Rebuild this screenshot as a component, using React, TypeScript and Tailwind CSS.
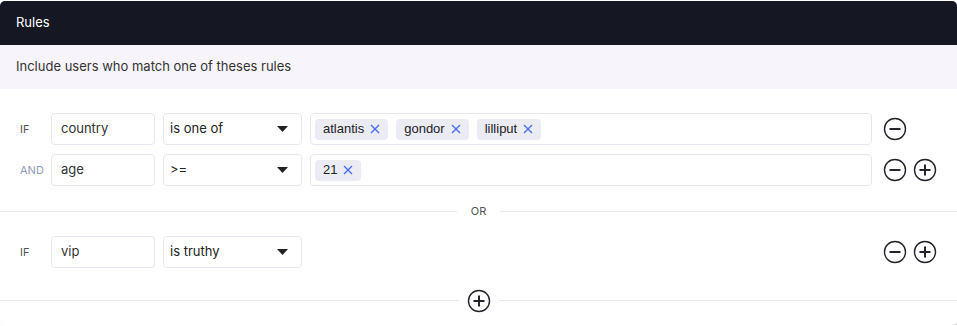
import { Fragment } from "react";

type Rule = {
  prefix: string;
  field: string;
  op: string;
  values?: string[];
  canAdd: boolean;
};

const groups: Rule[][] = [
  [
    { prefix: "IF", field: "country", op: "is one of", values: ["atlantis", "gondor", "lilliput"], canAdd: false },
    { prefix: "AND", field: "age", op: ">=", values: ["21"], canAdd: true },
  ],
  [{ prefix: "IF", field: "vip", op: "is truthy", canAdd: true }],
];

const CircleIcon = ({ plus }: { plus?: boolean }) => (
  <svg width="24" height="24" viewBox="0 0 24 24" fill="none" stroke="#23242b">
    <circle cx="12" cy="12" r="10.5" strokeWidth="1.4" />
    <path d="M6.5 12h11" strokeWidth="2" />
    {plus && <path d="M12 6.5v11" strokeWidth="2" />}
  </svg>
);

const Chip = ({ label }: { label: string }) => (
  <span className="flex h-[21px] items-center gap-[6px] rounded-[4px] bg-[#ebebf4] pl-2 pr-2 font-['Liberation_Sans',sans-serif] text-[13px] text-[#222]">
    {label}
    <svg width="10" height="10" viewBox="0 0 10 10" stroke="#4a6cf0" strokeWidth="1.4">
      <path d="M1 1l8 8M9 1L1 9" />
    </svg>
  </span>
);

const Divider = ({ children }: { children: React.ReactNode }) => (
  <div className="flex h-px items-center">
    <div className="h-px flex-1 bg-[#e8e8f1]" />
    {children}
    <div className="h-px flex-1 bg-[#e8e8f1]" />
  </div>
);

const RuleRow = ({ rule }: { rule: Rule }) => (
  <div className="flex h-8 items-center">
    <span
      className={`w-[51px] pl-5 text-[11px] ${rule.prefix === "AND" ? "text-[#8f9bb3]" : "text-[#555]"}`}
    >
      {rule.prefix}
    </span>
    <div className="flex h-8 w-[104px] items-center rounded-[4px] border border-[#e6e6f0] px-[9px] text-[13px] text-[#333]">
      {rule.field}
    </div>
    <div className="ml-2 flex h-8 w-[139px] items-center justify-between rounded-[4px] border border-[#e6e6f0] pl-[6px] pr-[13px] text-[13px] text-[#222]">
      {rule.op}
      <svg width="11" height="6" viewBox="0 0 11 6">
        <path d="M0 0h11L5.5 6z" fill="#222" />
      </svg>
    </div>
    {rule.values ? (
      <div className="ml-2 flex h-8 w-[562px] items-center gap-2 rounded-[4px] border border-[#e6e6f0] px-1">
        {rule.values.map((v) => (
          <Chip key={v} label={v} />
        ))}
      </div>
    ) : (
      <div className="ml-2 w-[562px]" />
    )}
    <div className="ml-[11px] flex items-center gap-[6px]">
      <CircleIcon />
      {rule.canAdd && <CircleIcon plus />}
    </div>
  </div>
);

export default function App() {
  return (
    <div className="w-[957px] pt-px font-['Inter',sans-serif]">
      <div className="overflow-hidden rounded-t-[5px] rounded-b-[4px] bg-white shadow-[1px_1px_1px_rgba(0,0,0,0.22)]">
        <div className="flex h-11 items-center bg-[#151722] px-4 text-[13px] text-white">Rules</div>
        <div className="flex h-11 items-center bg-[#f7f5fb] px-4 text-[13px] text-[#333]">
          Include users who match one of theses rules
        </div>
        {groups.map((group, gi) => (
          <Fragment key={gi}>
            {gi > 0 && (
              <Divider>
                <span className="px-[14px] text-[11px] leading-none text-[#555]">OR</span>
              </Divider>
            )}
            <div className={`flex flex-col gap-[9px] ${gi === 0 ? "pt-6 pb-[25px]" : "pt-6 pb-[32px]"}`}>
              {group.map((rule, ri) => (
                <RuleRow key={ri} rule={rule} />
              ))}
            </div>
          </Fragment>
        ))}
        <Divider>
          <div className="px-2">
            <CircleIcon plus />
          </div>
        </Divider>
        <div className="h-[24px]" />
      </div>
    </div>
  );
}
